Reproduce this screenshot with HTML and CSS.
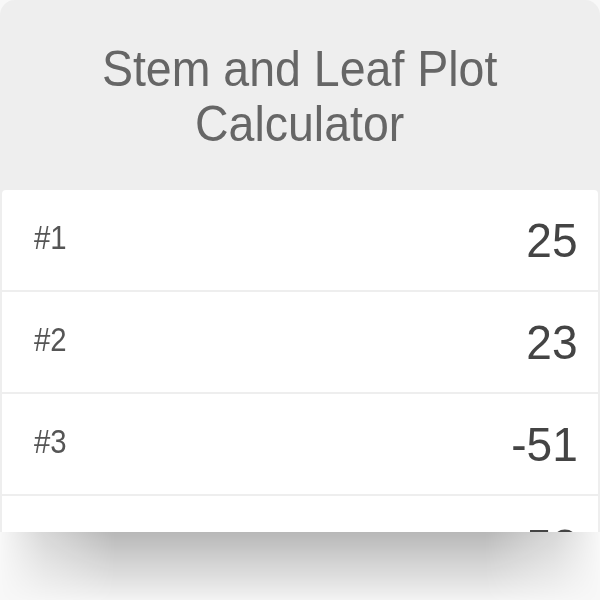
FILE: index.html
```html
<!DOCTYPE html>
<html>
<head>
<meta charset="utf-8">
<link rel="stylesheet" href="styles.css">
</head>
<body>
<div class="page">
  <div class="card">
    <div class="header">
      <h1 class="title">Stem and Leaf Plot<br>Calculator</h1>
    </div>
    <div class="rows">
      <div class="row"><span class="label">#1</span><span class="value">25</span></div>
      <div class="row"><span class="label">#2</span><span class="value">23</span></div>
      <div class="row"><span class="label">#3</span><span class="value">-51</span></div>
      <div class="row"><span class="label">#4</span><span class="value">52</span></div>
    </div>
  </div>
  <div class="shadow-zone"><div class="shadow"></div></div>
</div>
</body>
</html>
```

FILE: styles.css
```css
html, body {
  margin: 0;
  padding: 0;
  background: #f8f8f8;
}
.page {
  width: 600px;
  height: 600px;
  overflow: hidden;
  font-family: "Liberation Sans", Arial, sans-serif;
}
.card {
  height: 532px;
  overflow: hidden;
  background: #eeeeee;
  border-radius: 15px 15px 0 0;
  padding: 0 2px;
  box-sizing: border-box;
}
.header {
  height: 190px;
  padding-top: 42px;
  box-sizing: border-box;
  text-align: center;
}
.title {
  display: inline-block;
  margin: 0;
  font-weight: normal;
  font-size: 50px;
  line-height: 55px;
  color: #666666;
  transform: scaleX(0.93);
  transform-origin: 50% 50%;
}
.rows {
  display: flex;
  flex-direction: column;
  gap: 2px;
}
.row {
  flex: 0 0 100px;
  height: 100px;
  background: #ffffff;
  display: flex;
  align-items: center;
  justify-content: space-between;
  padding: 0 20px 0 32px;
}
.row:first-child {
  border-radius: 4px 4px 0 0;
}
.label {
  display: inline-block;
  font-size: 33px;
  line-height: 1;
  color: #555555;
  margin-bottom: 5px;
  transform: scaleX(0.89);
  transform-origin: 0 50%;
}
.value {
  display: inline-block;
  font-size: 49px;
  line-height: 1;
  color: #444444;
  transform: scaleX(0.94);
  transform-origin: 100% 50%;
}
.shadow-zone {
  height: 68px;
  background: #f8f8f8;
}
.shadow {
  height: 100%;
  background: linear-gradient(to bottom, rgba(0,0,0,0.26), rgba(0,0,0,0.15) 45%, rgba(0,0,0,0.02) 100%);
  -webkit-mask-image: linear-gradient(to right, transparent 0, rgba(0,0,0,0.5) 45px, #000 115px, #000 485px, rgba(0,0,0,0.5) 555px, transparent 600px);
  mask-image: linear-gradient(to right, transparent 0, rgba(0,0,0,0.5) 45px, #000 115px, #000 485px, rgba(0,0,0,0.5) 555px, transparent 600px);
}
```
